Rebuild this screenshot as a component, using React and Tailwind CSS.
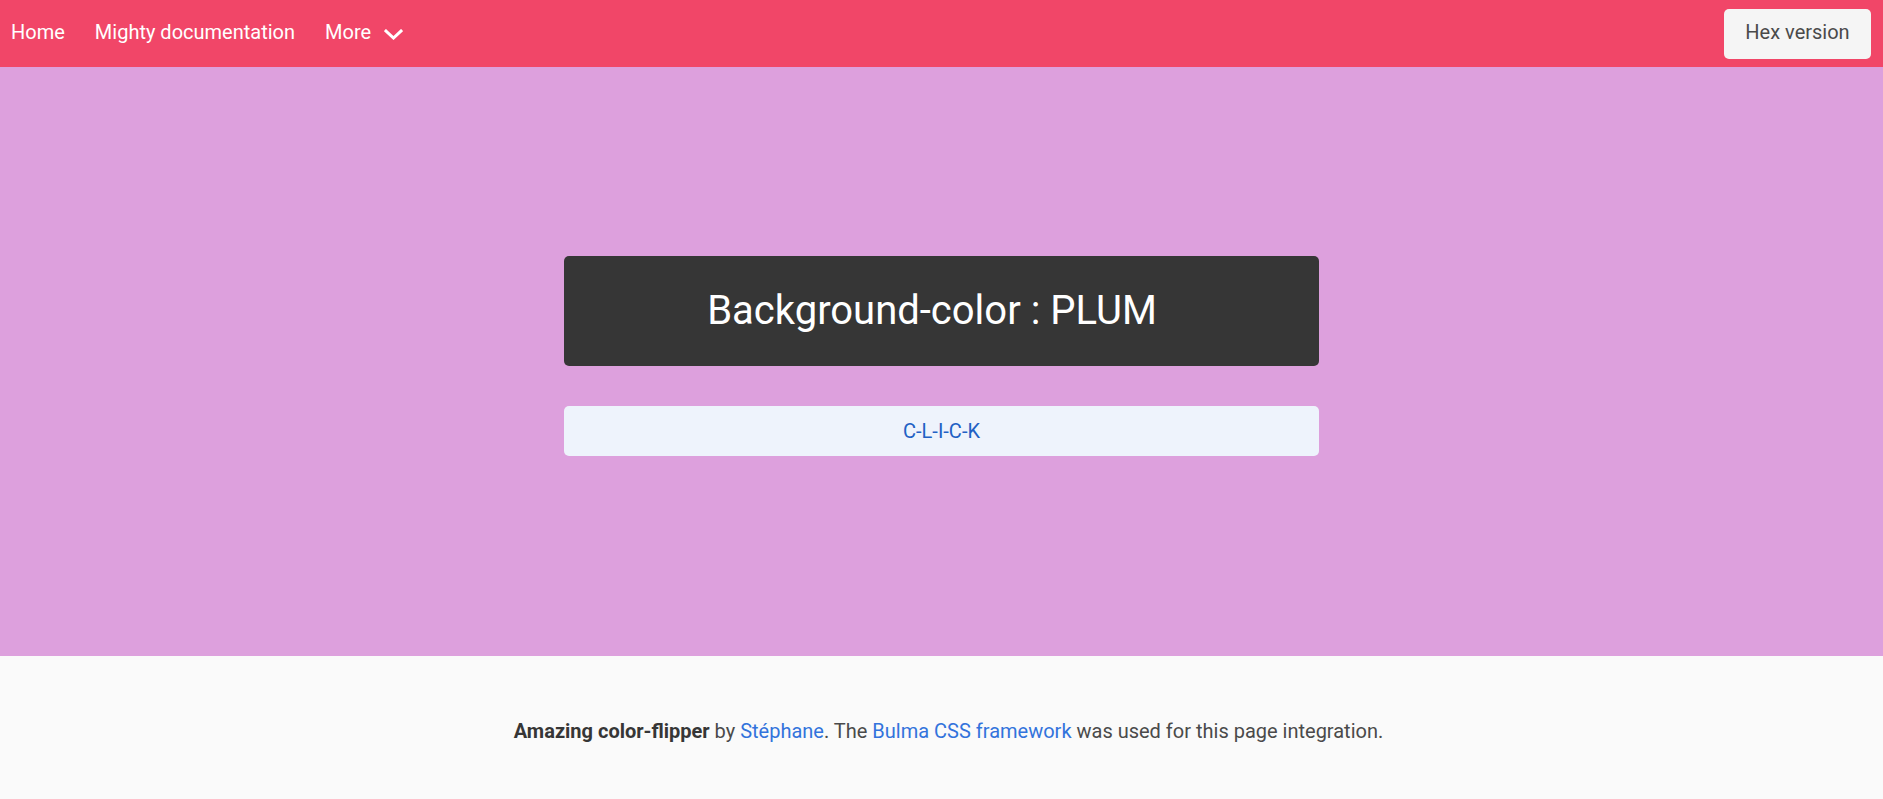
const NavItem = ({ children }) => (
  <a href="#" className="text-white text-[20px] leading-none">
    {children}
  </a>
);

const App = () => {
  return (
    <div className="min-h-screen bg-[#fafafa] font-['Roboto',sans-serif] text-[#4a4a4a]">
      <nav className="h-[67px] bg-[#f14668] flex items-center justify-between pl-[11px] pr-[12px]">
        <div className="flex items-center gap-[30px] pb-[3px]">
          <NavItem>Home</NavItem>
          <NavItem>Mighty documentation</NavItem>
          <a href="#" className="flex items-center text-white text-[20px] leading-none">
            More
            <svg
              className="ml-[13px] mt-[4px]"
              width="19"
              height="11"
              viewBox="0 0 19 11"
              fill="none"
              stroke="white"
              strokeWidth="3"
              strokeLinecap="square"
            >
              <path d="M2 2l7.5 7 7.5-7" />
            </svg>
          </a>
        </div>
        <button className="h-[50px] w-[147px] pb-[3px] rounded-[5px] bg-[#f5f5f5] text-[#4a4a4a] text-[20px]">
          Hex version
        </button>
      </nav>

      <main className="h-[589px] bg-[#dda0dd] pt-[189px] flex flex-col items-center">
        <div className="w-[755px] h-[110px] pr-[19px] rounded-[5px] bg-[#363636] flex items-center justify-center">
          <h1 className="text-white text-[40px] leading-none">Background-color : PLUM</h1>
        </div>
        <button className="mt-[40px] w-[755px] h-[50px] rounded-[5px] bg-[#eef3fc] text-[#2160c4] text-[20px]">
          C-L-I-C-K
        </button>
      </main>

      <footer className="bg-[#fafafa] pt-[60px] pb-[54px] pl-[14px] text-center text-[20px] leading-[1.5]">
        <p>
          <strong className="font-bold text-[#363636]">Amazing color-flipper</strong> by{" "}
          <a href="#" className="text-[#3273dc]">Stéphane</a>. The{" "}
          <a href="#" className="text-[#3273dc]">Bulma CSS framework</a> was used for this page integration.
        </p>
      </footer>
    </div>
  );
};

export default App;
